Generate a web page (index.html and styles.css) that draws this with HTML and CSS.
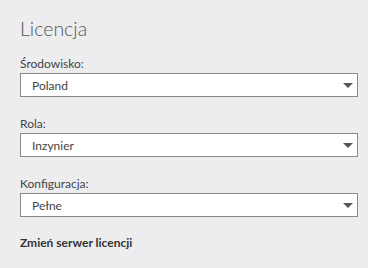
FILE: index.html
```html
<!DOCTYPE html>
<html lang="pl">
<head>
    <meta charset="UTF-8">
    <meta name="viewport" content="width=device-width, initial-scale=1.0">
    <title>Licencja</title>
    <link rel="stylesheet" href="styles.css">
</head>
<body>
    <main class="panel">
        <h1 class="title">Licencja</h1>

        <!-- each field: label + dropdown box -->
        <div class="field">
            <label class="field-label">Środowisko:</label>
            <div class="select">
                <span class="select-value">Poland</span>
                <svg class="arrow" width="10" height="5" viewBox="0 0 10 5"><path d="M0 0H10L5 5Z" fill="#555"/></svg>
            </div>
        </div>

        <div class="field">
            <label class="field-label">Rola:</label>
            <div class="select">
                <span class="select-value">Inzynier</span>
                <svg class="arrow" width="10" height="5" viewBox="0 0 10 5"><path d="M0 0H10L5 5Z" fill="#555"/></svg>
            </div>
        </div>

        <div class="field">
            <label class="field-label">Konfiguracja:</label>
            <div class="select">
                <span class="select-value">Pełne</span>
                <svg class="arrow" width="10" height="5" viewBox="0 0 10 5"><path d="M0 0H10L5 5Z" fill="#555"/></svg>
            </div>
        </div>

        <a class="link" href="#">Zmień serwer licencji</a>
    </main>
</body>
</html>
```

FILE: styles.css
```css
/* Global */
body {
    margin: 0;
    background-color: #ededf0;
    font-family: Lato, "Open Sans", sans-serif;
    color: #444;
}

.panel {
    display: flex;
    flex-direction: column;
    padding: 15px 10px 0 20px;
}

.title {
    margin: 0 0 13px 0;
    font-size: 19.5px;
    font-weight: 300;
    line-height: 28px;
    color: #555;
}

/* Fields */
.field {
    display: flex;
    flex-direction: column;
    gap: 1px;
    margin-bottom: 19px;
}

.field-label {
    font-size: 12px;
    line-height: 16px;
    color: #444;
}

.select {
    height: 24px;
    box-sizing: border-box;
    display: flex;
    align-items: center;
    justify-content: space-between;
    padding: 0 4px 0 11px;
    background-color: #fff;
    border: 1px solid #8a8a8a;
}

.select-value {
    font-size: 12px;
    color: #444;
}

.link {
    margin-top: -1px;
    font-size: 12px;
    line-height: 16px;
    font-weight: 700;
    color: #333;
    text-decoration: none;
}
```
